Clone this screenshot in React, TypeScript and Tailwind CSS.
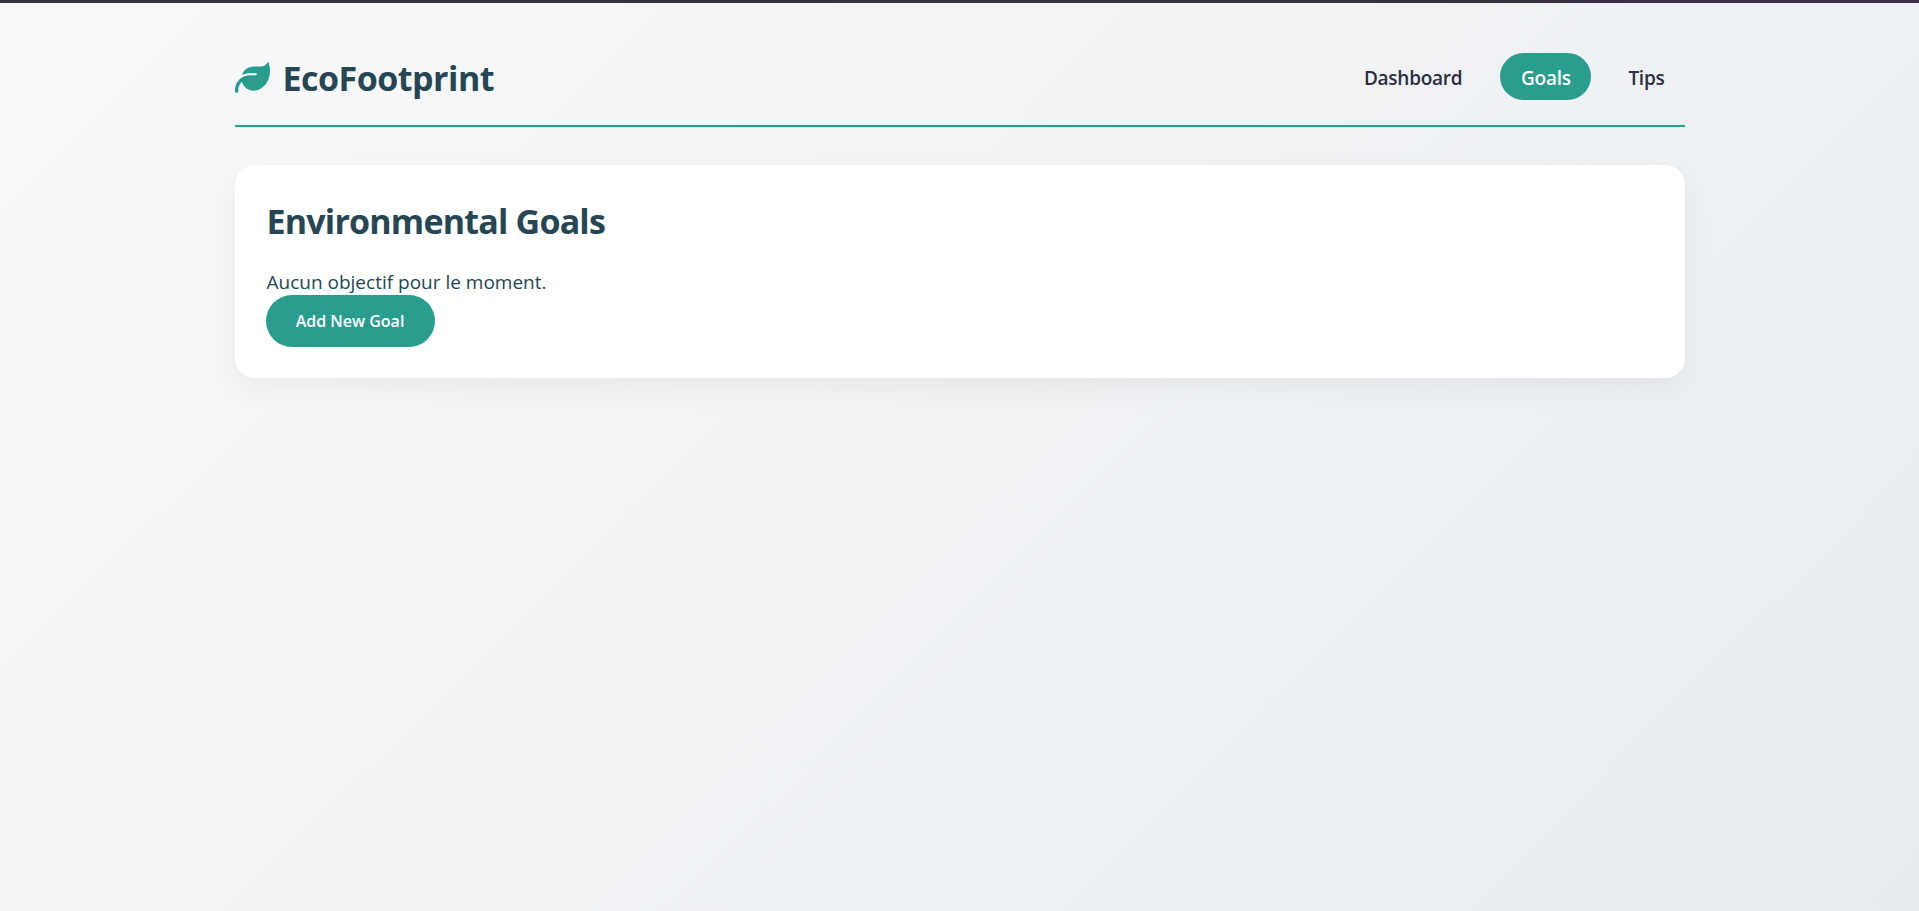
import { FaLeaf } from "react-icons/fa6";

export default function App() {
  return (
    <div className="min-h-screen bg-[linear-gradient(135deg,#f8f9fa,#e9ecef)] font-['Open_Sans',sans-serif] text-[#264653]">
      <div className="h-[3px] bg-[#3a3042]" />
      <div className="mx-auto w-[1450px]">
        <header className="flex h-[124px] items-center justify-between border-b-2 border-[#2a9d8f] pt-[38px] pb-[13px]">
          <div className="mt-[2px] flex items-center gap-[13px]">
            <FaLeaf className="h-[35px] w-[35px] text-[#2a9d8f]" />
            <span className="text-[34px] leading-[48px] font-bold tracking-[-0.5px]">EcoFootprint</span>
          </div>
          <nav className="flex items-center gap-[18px] text-[19px] leading-[27px] font-semibold tracking-[-0.25px] text-[#2b2d42]">
            <a className="rounded-full px-[20px] pt-[12px] pb-[8px]">Dashboard</a>
            <a className="-mr-px w-[91px] rounded-full bg-[#2a9d8f] pt-[12px] pb-[8px] text-center text-white">Goals</a>
            <a className="rounded-full px-[20px] pt-[12px] pb-[8px]">Tips</a>
          </nav>
        </header>
        <main className="mt-[38px] rounded-[20px] bg-white px-[32px] pt-[32px] pb-[31px] shadow-[0_10px_30px_rgba(0,0,0,0.05)]">
          <h2 className="mb-[25px] text-[34px] leading-[48px] font-bold tracking-[-0.8px]">Environmental Goals</h2>
          <p className="text-[19px] leading-[25px]">Aucun objectif pour le moment.</p>
          <button className="-ml-px h-[52px] w-[169px] rounded-full bg-[#2a9d8f] text-[16px] font-semibold text-white">Add New Goal</button>
        </main>
      </div>
    </div>
  );
}
